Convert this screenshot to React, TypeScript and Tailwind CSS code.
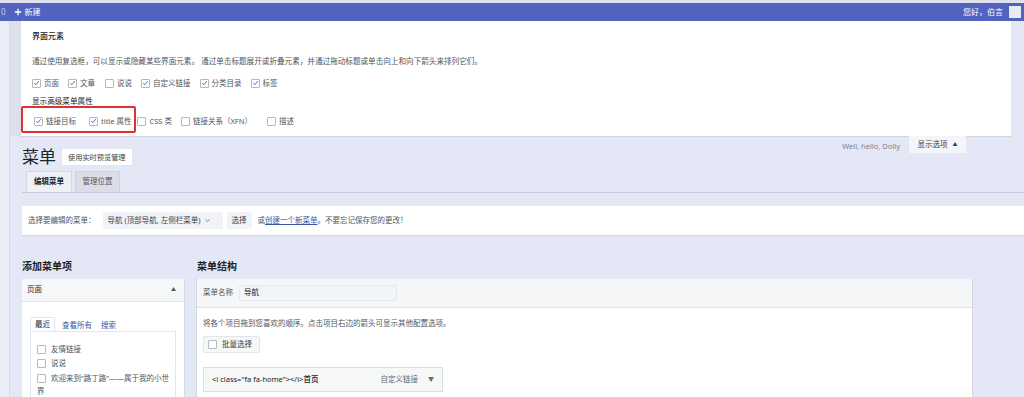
import React from "react";

function Cb({ checked }: { checked?: boolean }) {
  return (
    <span className="inline-flex w-[9px] h-[9px] border border-[#b4b9be] rounded-[1px] bg-white items-center justify-center shrink-0">
      {checked && (
        <svg viewBox="0 0 10 10" className="w-[8px] h-[8px]">
          <path d="M1.8 5.2 L4.1 7.4 L8.3 2.3" fill="none" stroke="#5262bf" strokeWidth="1.4" />
        </svg>
      )}
    </span>
  );
}

function Item({ checked, label, ml }: { checked?: boolean; label: string; ml?: string }) {
  return (
    <label className={`flex items-center gap-[3px] ${ml ?? ""}`}>
      <Cb checked={checked} />
      <span className="text-[7.5px] text-[#50575e] leading-[10px]">{label}</span>
    </label>
  );
}

export default function App() {
  return (
    <div className="relative w-[1024px] h-[397px] overflow-hidden bg-[#e4e7f5] font-['Noto_Sans','Noto_Sans_CJK_SC',sans-serif]">
      <div className="h-[3px] bg-[#dfe2ee]" />
      {/* top bar */}
      <div className="h-[18px] bg-[#5262bf] flex items-center text-white text-[8px]">
        <span className="ml-[1px] text-[#c9cdea]">0</span>
        <span className="ml-[8px] flex items-center gap-[3px]">
          <svg viewBox="0 0 10 10" className="w-[8px] h-[8px]">
            <path d="M5 1 V9 M1 5 H9" stroke="#fff" strokeWidth="1.6" />
          </svg>
          <span>新建</span>
        </span>
        <span className="ml-auto">您好，伯言</span>
        <span className="ml-[6px] mr-[3px] w-[12px] h-[12px] bg-[#e9ebf3]" />
      </div>

      <div className="flex">
        <div className="w-[10px] shrink-0 h-[400px] bg-[#eceef7] border-r border-[#d6d9e8]" />
        <div className="flex-1 min-w-0">
          {/* screen options */}
          <div className="flex">
            <div className="w-[11px] h-[115px] bg-[#dcdfec]" />
            <div className="w-[990px] h-[115px] bg-white shadow-[0_1px_1px_rgba(0,0,0,0.08)] pl-[11px] pt-[10px]">
              <div className="text-[8px] leading-[10px] text-[#1d2327] font-medium">界面元素</div>
              <div className="mt-[15px] text-[7.6px] leading-[10px] text-[#50575e] whitespace-nowrap">
                通过使用复选框，可以显示或隐藏某些界面元素。 通过单击标题展开或折叠元素，并通过拖动标题或单击向上和向下箭头来排列它们。
              </div>
              <div className="mt-[12px] flex items-center gap-[9px]">
                <Item checked label="页面" />
                <Item checked label="文章" />
                <Item label="说说" ml="ml-[1px]" />
                <Item checked label="自定义链接" />
                <Item checked label="分类目录" />
                <Item checked label="标签" />
              </div>
              <div className="mt-[8px] text-[7.6px] leading-[10px] text-[#1d2327]">显示高级菜单属性</div>
              <div className="mt-[10px] ml-[2px] flex items-center">
                <Item checked label="链接目标" />
                <Item checked label="title 属性" ml="ml-[13px]" />
                <Item label="CSS 类" ml="ml-[6px]" />
                <Item label="链接关系（XFN）" ml="ml-[9px]" />
                <Item label="描述" ml="ml-[15px]" />
              </div>
            </div>
          </div>

          <div className="pl-[12px]">
            {/* heading row */}
            <div className="flex items-start">
              <div className="flex items-center gap-[5px] pt-[12px]">
                <h1 className="text-[17px] leading-[18px] text-[#1d2327]">菜单</h1>
                <button className="h-[18px] px-[6px] bg-white border border-[#e3e6f2] rounded-[2px] text-[7.2px] text-[#3c434a]">
                  使用实时预览管理
                </button>
              </div>
              <div className="ml-auto mr-[58px] flex items-start">
                <span className="mt-[5px] text-[7.5px] text-[#7d8290]">Well, hello, Dolly</span>
                <div className="ml-[9px] w-[57px] h-[17px] bg-[#f4f5fa] flex items-center justify-center gap-[5px] text-[7.5px] text-[#3c434a]">
                  <span>显示选项</span>
                  <span className="text-[5px]">▲</span>
                </div>
              </div>
            </div>

            {/* tabs */}
            <div className="mt-[6px] h-[21px] border-b border-[#c8cbd8] flex items-end pl-[4px] gap-[3px]">
              <div className="w-[46px] h-[21px] bg-[#eef0f6] border border-b-0 border-[#d5d8e4] flex items-center justify-center text-[7.5px] font-bold text-[#1d2327]">
                编辑菜单
              </div>
              <div className="w-[45px] h-[21px] bg-[#dadce6] border border-b-0 border-[#d0d3de] flex items-center justify-center text-[7.5px] text-[#50575e]">
                管理位置
              </div>
            </div>

            {/* select bar */}
            <div className="mt-[13px] h-[29px] bg-white shadow-[0_1px_1px_rgba(0,0,0,0.06)] flex items-center pl-[6px] text-[7.5px] text-[#50575e]">
              <span>选择要编辑的菜单：</span>
              <span className="ml-[7px] h-[17px] w-[120px] bg-[#f2f3f8] rounded-[2px] flex items-center gap-[4px] px-[5px] text-[#3c434a]">
                导航 (顶部导航, 左侧栏菜单)
                <svg viewBox="0 0 10 10" className="w-[7px] h-[7px]">
                  <path d="M2 3.5 L5 6.5 L8 3.5" fill="none" stroke="#50575e" strokeWidth="1" />
                </svg>
              </span>
              <span className="ml-[4px] h-[17px] w-[25px] bg-[#f2f3f8] rounded-[2px] flex items-center justify-center text-[#3c434a]">选择</span>
              <span className="ml-[6px]">
                或<span className="underline text-[#3858a0]">创建一个新菜单</span>。不要忘记保存您的更改！
              </span>
            </div>

            {/* columns */}
            <div className="mt-[25px] flex items-start">
              <div className="w-[163px] shrink-0">
                <div className="text-[10px] leading-[12px] font-bold text-[#1d2327]">添加菜单项</div>
                <div className="mt-[7px] bg-white border-r border-[#d6d9e6] h-[200px]">
                  <div className="h-[23px] bg-[#f6f7f9] border-b border-[#e3e5ec] flex items-center px-[5px] text-[7.5px] text-[#1d2327]">
                    <span>页面</span>
                    <span className="ml-auto mr-[3px] text-[5px] text-[#50575e]">▲</span>
                  </div>
                  <div className="mx-[8px] mt-[15px]">
                    <div className="flex items-end text-[7.5px] h-[14px]">
                      <span className="h-[14px] px-[4px] border border-b-0 border-[#e3e5ec] flex items-center text-[#1d2327]">最近</span>
                      <span className="ml-[7px] text-[#3858a0]">查看所有</span>
                      <span className="ml-[9px] text-[#3858a0]">搜索</span>
                    </div>
                    <div className="border border-[#e3e5ec] h-[120px] pl-[6px] pt-[10px] text-[7.5px] text-[#50575e]">
                      <div className="flex items-center gap-[5px] h-[14.5px]">
                        <Cb />
                        <span>友情链接</span>
                      </div>
                      <div className="flex items-center gap-[5px] h-[14.5px]">
                        <Cb />
                        <span>说说</span>
                      </div>
                      <div className="flex items-center gap-[5px] h-[14.5px]">
                        <Cb />
                        <span>欢迎来到“路丁路”——属于我的小世</span>
                      </div>
                      <div className="h-[13px] flex items-center">界</div>
                    </div>
                  </div>
                </div>
              </div>

              <div className="ml-[11px] flex-1 min-w-0">
                <div className="pl-[1px] text-[10px] leading-[12px] font-bold text-[#1d2327]">菜单结构</div>
                <div className="mt-[7px] w-[777px] h-[200px] bg-white border-x border-[#d3d6e3]">
                  <div className="h-[29px] bg-[#f5f6f7] border-b border-[#dfe1e6] flex items-center pl-[6px] text-[7.5px] text-[#50575e]">
                    <span>菜单名称</span>
                    <span className="ml-[6px] h-[16px] w-[158px] bg-[#f2f4f8] border border-[#e6e8ef] rounded-[2px] flex items-center px-[4px] text-[#1d2327]">导航</span>
                  </div>
                  <div className="pl-[6px] pt-[10px] text-[7.5px] text-[#50575e]">
                    <div className="leading-[10px]">将各个项目拖到您喜欢的顺序。点击项目右边的箭头可显示其他配置选项。</div>
                    <div className="mt-[8px] w-[57px] h-[17px] bg-[#f6f7f7] border border-[#e3e5ec] rounded-[2px] flex items-center pl-[4px] gap-[5px]">
                      <Cb />
                      <span className="text-[#3c434a]">批量选择</span>
                    </div>
                    <div className="mt-[14px] w-[240px] h-[25px] bg-[#f6f7f7] border border-[#dcdde3] flex items-center pl-[8px] pr-[8px]">
                      <span className="text-[#1d2327]">&lt;i class="fa fa-home"&gt;&lt;/i&gt;<span className="font-medium">首页</span></span>
                      <span className="ml-auto text-[#646970]">自定义链接</span>
                      <span className="ml-[10px] text-[6px] text-[#646970]">▼</span>
                    </div>
                  </div>
                </div>
              </div>
            </div>
          </div>
        </div>
      </div>

      {/* annotation box */}
      <div className="absolute left-[21px] top-[106px] w-[115px] h-[27px] border-2 border-[#e0312f] rounded-[2px]" />
    </div>
  );
}
